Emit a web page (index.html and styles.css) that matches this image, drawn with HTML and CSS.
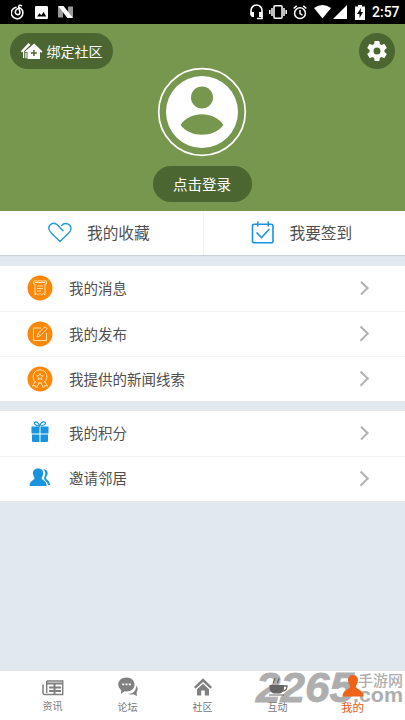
FILE: index.html
```
<!DOCTYPE html>
<html lang="zh-CN">
<head>
<meta charset="utf-8">
<title>我的</title>
<link rel="stylesheet" href="styles.css">
</head>
<body>
<div class="app">
  <header class="status">
    <div class="status-left">
      <svg width="14" height="16" viewBox="0 0 14 16" fill="none" stroke="#fff" stroke-width="1.6" stroke-linecap="round"><path d="M5 3.200A5.800 5.800 0 1 0 9.500 4.200C6 3.700 4 6.500 4.400 8.800s4.200 2.600 4.600 0L7.700 3c-.2-1.700 1.400-2.200 2.700-1.300"/></svg>
      <svg width="13" height="13" viewBox="0 0 13 13"><rect width="13" height="13" rx="1.200" fill="#fff"/><path d="M2 10.500l2.500-3.300 1.800 2L8.600 6l2.700 4.500z" fill="#000"/></svg>
      <svg width="15" height="12" viewBox="0 0 15 12"><path d="M0 .5h5v11H0zM10 .5h5v11h-5z" fill="#999"/><path d="M0 0h5.500L15 12H9.500z" fill="#fff"/></svg>
    </div>
    <div class="status-right">
      <svg width="13" height="16" viewBox="0 0 13 16" fill="none" stroke="#fff" stroke-width="1.600"><path d="M1 11V6.500a5.500 5.500 0 0 1 11 0v8H7"/><path d="M.5 8H4v5H2L.5 11.500zM9 8h3.500v5H9z" fill="#fff" stroke="none"/></svg>
      <svg class="vibrate" width="18" height="14" viewBox="0 0 18 14" fill="none" stroke="#fff" stroke-width="1.500"><rect x="5" y=".8" width="8" height="12.400" rx="1"/><path d="M3 3v8M.8 5v4M15 3v8M17.200 5v4"/></svg>
      <svg class="alarm" width="14" height="15" viewBox="0 0 14 15" fill="none" stroke="#fff" stroke-width="1.500"><circle cx="7" cy="8.200" r="5.400"/><path d="M7 5v3.600l2.500 1.500M.6 3.500L3.700.9M13.400 3.500L10.300.9"/></svg>
      <svg class="wifi" width="17" height="14" viewBox="0 0 17 14"><path d="M0 3Q8.500-3 17 3L8.500 13.500z" fill="#fff"/></svg>
      <svg class="signal" width="14" height="14" viewBox="0 0 14 14"><path d="M14 0v14H0z" fill="#fff"/></svg>
      <svg class="battery" width="10" height="15" viewBox="0 0 10 15"><path d="M3 0h4v1.500h3V15H0V1.500h3z" fill="#fff"/><path d="M6 3L2 9h2.500v4L8 7H5.700z" fill="#000"/></svg>
      <span class="clock">2:57</span>
    </div>
  </header>

  <section class="profile">
    <div class="profile-top">
      <button class="pill bind">
        <svg width="22" height="17" viewBox="0 0 22 17" fill="#fff"><path d="M7.500 0L9.500 1.800 3.200 8V15H2V8.600L.8 9.400 0 8z"/><path d="M13.200.5l8.300 8-1 1.200-1.500-.7v7H6.500V9L5 9.600 4 8.500z"/><path d="M4.300 10v5.200h1.300V10z"/><path d="M12.900 7v6M9.900 10h6" stroke="#4c6632" stroke-width="1.500"/></svg>
        <span>绑定社区</span>
      </button>
      <button class="gear">
        <svg width="24" height="24" viewBox="0 0 24 24" fill="#fff"><path fill-rule="evenodd" d="M19.430 12.980c.04-.32.070-.64.070-.98s-.03-.66-.07-.98l2.110-1.650c.19-.15.240-.42.120-.64l-2-3.460c-.12-.22-.39-.3-.61-.22l-2.490 1c-.52-.4-1.080-.73-1.690-.98l-.38-2.650A.49.49 0 0 0 14 2h-4c-.25 0-.46.180-.49.420l-.38 2.650c-.61.250-1.170.59-1.690.98l-2.490-1c-.23-.09-.49 0-.61.220l-2 3.460c-.13.220-.07.490.12.640l2.110 1.650c-.04.320-.07.650-.07.980s.03.660.070.980l-2.110 1.650c-.19.150-.24.420-.12.640l2 3.460c.12.220.39.300.61.220l2.490-1c.52.400 1.080.730 1.690.980l.38 2.650c.03.240.24.420.49.420h4c.25 0 .46-.18.490-.42l.38-2.650c.61-.25 1.170-.59 1.690-.98l2.490 1c.23.090.49 0 .61-.22l2-3.460c.12-.22.070-.49-.12-.64zM12 15.500a3.500 3.500 0 1 1 0-7 3.500 3.500 0 0 1 0 7z"/></svg>
      </button>
    </div>
    <svg class="avatar" width="90" height="90" viewBox="0 0 90 90"><circle cx="45" cy="45" r="43.300" fill="none" stroke="#fff" stroke-width="1.700"/><circle cx="45" cy="45" r="36" fill="#fff"/><circle cx="45" cy="30.500" r="11" fill="#77974f"/><path d="M23.500 58C33 43.500 57 43.500 66.500 58 57 71 33 71 23.500 58z" fill="#77974f"/></svg>
    <button class="pill login">点击登录</button>
  </section>

  <section class="shortcuts">
    <a class="shortcut">
      <svg width="24" height="21" viewBox="0 0 24 21" fill="none" stroke="#269ada" stroke-width="1.400" stroke-linecap="round" stroke-linejoin="round"><path d="M15 8.800L9.500 3C5.500-.8.300 2.600.9 7c.3 2 1.400 3 2.600 4.200L12 19.500l8.500-8.300C22.500 9.300 23.300 8 23 6c-.8-4.600-6.200-6-9.500-2.400"/></svg>
      <span>我的收藏</span>
    </a>
    <a class="shortcut">
      <svg width="24" height="23" viewBox="0 0 24 23" fill="none" stroke="#1994df" stroke-width="1.600"><rect x="1.500" y="3.300" width="20.500" height="18.500" rx="1.800"/><path d="M6.700.5v5M17.300.5v5M5.500 11.500l5 5 8-8.500"/></svg>
      <span>我要签到</span>
    </a>
  </section>

  <section class="list">
    <a class="row">
      <svg class="icon" viewBox="0 0 26 26" fill="none" stroke="#ffe0a8" stroke-width="1"><circle cx="13" cy="13" r="12.500" fill="#fb870b" stroke="none"/><path d="M8 9H6.500V6H19.500v3H18v11l-1.700-1.500L14.700 20 13 18.500 11.300 20l-1.600-1.500L8 20zM8 7.500h10M10 11h6M10 13.500h6M10 16h4"/></svg>
      <span>我的消息</span><i class="arrow small"></i>
    </a>
    <a class="row">
      <svg class="icon" viewBox="0 0 26 26" fill="none" stroke="#ffe0a8" stroke-width="1"><circle cx="13" cy="13" r="12.500" fill="#fb870b" stroke="none"/><path d="M14 7H6.500v12.500h13V12M10 16l1-3.500L18 5.700l2.200 2.200-7 6.800zM11 12.500l2.200 2.200"/></svg>
      <span>我的发布</span><i class="arrow"></i>
    </a>
    <a class="row">
      <svg class="icon" viewBox="0 0 26 26" fill="none" stroke="#ffe0a8" stroke-width="1"><circle cx="13" cy="13" r="12.500" fill="#fb870b" stroke="none"/><path d="M9 16.500a7 7 0 1 1 8 0M13 7.600l1 2 2.200.3-1.600 1.500.4 2.200-2-1.100-2 1.100.4-2.200-1.600-1.500 2.200-.3zM8.500 15L5.500 20l2.700-.4L9.500 22l2.500-5M17.500 15l3 5-2.700-.4-1.300 2.400-2.500-5M11 17h4"/></svg>
      <span>我提供的新闻线索</span><i class="arrow"></i>
    </a>
  </section>

  <section class="list">
    <a class="row">
      <svg class="icon" viewBox="0 0 26 26"><path d="M4.500 6.500h8v7h-8zM13.500 6.500h8v7h-8zM5 14.500h7.500V22H6q-1 0-1-1zM13.500 14.500H21V21q0 1-1 1h-6.500z" fill="#1994df"/><path d="M12 6C8 5.500 6.500 3.500 8 2.200S11.500 3 12.700 6C13.500 3 16 .9 17.800 2.200S17.500 5.500 14 6" fill="none" stroke="#1994df" stroke-width="1.200"/></svg>
      <span>我的积分</span><i class="arrow small"></i>
    </a>
    <a class="row">
      <svg class="icon" viewBox="0 0 26 26" fill="#1994df"><path d="M11 3.500c4 0 5.700 2.500 5.200 5.600-.3 2-1.500 3.200-1.500 4.200 0 2.300 4.700 1.500 5 7.700H2.500c.4-6.200 5-5.400 5-7.700 0-1-1.200-2.200-1.500-4.200C5.500 6 7.200 3.500 11 3.500z"/><path d="M16.300 4.300c3.600.2 4.900 2.700 4.200 5.200-.4 1.500-1.500 2.200-1.500 3.200 0 2.200 3.600 2 4 7.300h-1.900c-.8-4-4-4.300-4-7 0-1.200 1-1.700 1.200-4 .1-2-.6-3.500-2-4.700z"/></svg>
      <span>邀请邻居</span><i class="arrow"></i>
    </a>
  </section>

  <nav class="tabs">
    <a class="tab">
      <svg width="22" height="20" viewBox="0 0 22 20" fill="none" stroke="#808080" stroke-width="1.500"><path d="M4.700 3h16v13.500H3.200Q1 16.500 1 14V6.500M4.700 3v12"/><path d="M4.500 5.500h16M7 9.500h12M7 13h12M12.500 6.500v10" stroke-width="2"/></svg>
      <span>资讯</span>
    </a>
    <a class="tab low">
      <svg width="20" height="20" viewBox="0 0 20 20"><path d="M10 16.500c4 1 8-2 8.500-8 1.500 2 1.500 5 0 7l.5 3.500-3.500-1.800c-2.500.7-4.500.3-5.500-.7z" fill="#808080"/><path d="M8.500.5c5 0 8 3 8 7s-3 7-8 7l-2-.2L3 17l.2-4C-2.500 8.500.5.500 8.500.5z" fill="#808080"/><path d="M4.200 6.500h2v1.700h-2zM7.500 6.500h2v1.700h-2zM10.800 6.500h2v1.700h-2z" fill="#fff"/></svg>
      <span>论坛</span>
    </a>
    <a class="tab low">
      <svg width="20" height="20" viewBox="0 0 20 20" fill="#808080"><path d="M10 1.200l9 8.800-1.500 1.700L10 4.900l-7.500 6.800L1 10z"/><path d="M4 12.200l6-5.400 6 5.400v6.300h-4.200v-5H8.200v5H4z"/></svg>
      <span>社区</span>
    </a>
    <a class="tab low">
      <svg width="20" height="20" viewBox="0 0 20 20"><path d="M1.500 8h14.500v3c0 3.500-2.500 5.500-5 5.500H6.500C4 16.500 1.500 14 1.500 11zM1 17.500h15v1H1z" fill="#666"/><path d="M15.500 9H19c0 4-2 5-4.500 5M6 6c-2-2 2-2.500.8-5M10 6c-2-2 2-2.500.8-5" fill="none" stroke="#666" stroke-width="1.300"/></svg>
      <span>互动</span>
    </a>
    <a class="tab active">
      <svg width="22" height="22" viewBox="0 0 22 22" fill="#ee6318"><path d="M11 0c4 0 5.500 3 4.800 6.500-.3 2-1.300 3.500-1.800 4.500-.5 4 7.200 2.500 7.500 10.500H.5C.8 13.500 8.500 15 8 11c-.5-1-1.500-2.500-1.800-4.500C5.500 3 7 0 11 0z"/></svg>
      <span>我的</span>
    </a>
    <svg class="watermark" width="152" height="36" viewBox="0 0 152 36">
      <text class="wm-num" x="3" y="32" textLength="98" lengthAdjust="spacingAndGlyphs">2265</text>
      <text class="wm-cn" x="105" y="16" textLength="45" lengthAdjust="spacingAndGlyphs">手游网</text>
      <text class="wm-com" x="100" y="32" textLength="50" lengthAdjust="spacingAndGlyphs">.com</text>
    </svg>
  </nav>
</div>
</body>
</html>
```
FILE: styles.css
```
* { box-sizing: border-box; }
body {
  margin: 0;
  font-family: "Noto Sans CJK SC", sans-serif;
  color: #505050;
}
svg { display: block; flex: none; }
button { border: 0; padding: 0; font: inherit; color: #fff; }
.app {
  width: 405px;
  height: 720px;
  display: flex;
  flex-direction: column;
  background: #e1e8ee;
  overflow: hidden;
}
.status {
  height: 24px;
  flex: none;
  background: #000;
  display: flex;
  justify-content: space-between;
  align-items: center;
  padding: 0 6px 0 11px;
}
.status-left, .status-right { display: flex; align-items: center; }
.status-left { gap: 10px; }
.vibrate { margin-left: 6px; }
.alarm { margin-left: 6px; }
.wifi { margin-left: 7px; }
.signal { margin-left: 2px; }
.battery { margin-left: 8px; }
.clock {
  width: 27px;
  margin-left: 7px;
  font: 500 14px/24px Roboto, sans-serif;
  color: #fff;
  white-space: nowrap;
}
.profile {
  height: 186.500px;
  flex: none;
  background: #77974f;
  display: flex;
  flex-direction: column;
  align-items: center;
}
.avatar { margin-right: 1px; }
.profile-top {
  width: 100%;
  height: 43px;
  display: flex;
  justify-content: space-between;
  padding: 9px 10px 0;
}
.pill {
  height: 36px;
  border-radius: 18px;
  background: #4c6632;
  display: flex;
  align-items: center;
  justify-content: center;
}
.bind { width: 103px; gap: 4px; font-size: 14px; flex: none; }
.gear {
  width: 36px;
  height: 36px;
  border-radius: 50%;
  background: #4c6632;
  display: flex;
  align-items: center;
  justify-content: center;
}
.login { width: 99px; margin-top: 9px; padding: 0 1px 2px 0; font-size: 14.500px; }
.shortcuts {
  height: 44.500px;
  flex: none;
  display: flex;
  background: #fff;
  box-shadow: 0 1px 1px #ccd2d7;
}
.shortcut {
  flex: 1;
  display: flex;
  align-items: center;
  gap: 15px;
  padding: 0 0 0 48px;
  font-size: 15.700px;
}
.shortcut span { margin-top: -1px; }
.shortcut + .shortcut { padding-left: 47px; border-left: 1px solid #f5f5f5; }
.list { margin-top: 11px; background: #fff; flex: none; }
.list + .list { margin-top: 9.500px; }
.row {
  height: 45px;
  display: flex;
  align-items: center;
  padding: 0 37px 1px 27px;
  font-size: 14.500px;
}
.row span { margin-top: -1px; }
.row + .row { border-top: 1px solid #f4f4f4; }
.icon { width: 26px; height: 26px; margin-right: 16px; }
.arrow {
  width: 10.500px;
  height: 10.500px;
  margin-left: auto;
  margin-right: 1.500px;
  border: solid #b1b1b1;
  border-width: 2.200px 2.200px 0 0;
  transform: rotate(45deg);
}
.arrow.small { width: 9.500px; height: 9.500px; }
.tabs {
  position: relative;
  height: 50px;
  flex: none;
  margin-top: auto;
  background: #fff;
  border-top: 1px solid #dde2e5;
  display: flex;
  padding: 0 15px;
}
.tab {
  position: relative;
  z-index: 1;
  flex: 1;
  display: flex;
  flex-direction: column;
  align-items: center;
  padding-top: 7px;
  font-size: 10px;
  line-height: 16px;
  color: #777;
}
.tab.low { padding-top: 6px; }
.tab.low span { margin-top: 2px; }
.tab.active { padding-top: 4px; font-size: 11.500px; color: #f35b08; }
.tab.active span { margin-top: 2px; }
.watermark { position: absolute; left: 253px; top: -1px; opacity: .8; }
.watermark text { fill: #9b9b9b; }
.wm-num { font: italic 700 43px "Liberation Sans", sans-serif; stroke: #9b9b9b; stroke-width: .8px; }
.wm-cn { font: 500 15px "Noto Sans CJK SC", sans-serif; }
.wm-com { font: 700 20px "Liberation Sans", sans-serif; }
```
